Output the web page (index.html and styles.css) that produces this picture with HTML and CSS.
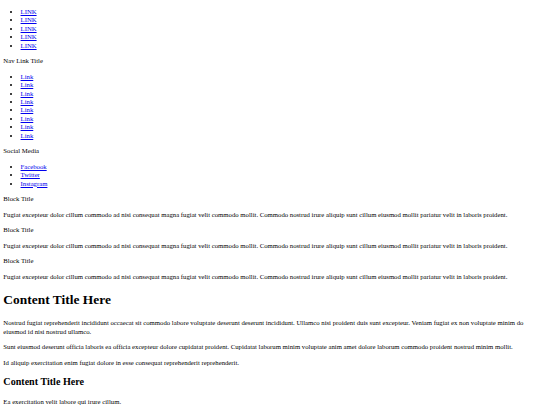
FILE: index.html
```html
<!DOCTYPE html>
<html lang="en">
<head>
<meta charset="utf-8">
<title>Page</title>
<link rel="stylesheet" href="styles.css">
</head>
<body>
<header>
  <nav>
    <ul class="list top-list">
      <li><a href="#">LINK</a></li>
      <li><a href="#">LINK</a></li>
      <li><a href="#">LINK</a></li>
      <li><a href="#">LINK</a></li>
      <li><a href="#">LINK</a></li>
    </ul>
  </nav>
</header>
<aside>
  <p class="title">Nav Link Title</p>
  <ul class="list">
    <li><a href="#">Link</a></li>
    <li><a href="#">Link</a></li>
    <li><a href="#">Link</a></li>
    <li><a href="#">Link</a></li>
    <li><a href="#">Link</a></li>
    <li><a href="#">Link</a></li>
    <li><a href="#">Link</a></li>
    <li><a href="#">Link</a></li>
  </ul>
  <p class="title">Social Media</p>
  <ul class="list">
    <li><a href="#">Facebook</a></li>
    <li><a href="#">Twitter</a></li>
    <li><a href="#">Instagram</a></li>
  </ul>
  <p class="title">Block Title</p>
  <p>Fugiat excepteur dolor cillum commodo ad nisi consequat magna fugiat velit commodo mollit. Commodo nostrud irure aliquip sunt cillum eiusmod mollit pariatur velit in laboris proident.</p>
  <p class="title">Block Title</p>
  <p>Fugiat excepteur dolor cillum commodo ad nisi consequat magna fugiat velit commodo mollit. Commodo nostrud irure aliquip sunt cillum eiusmod mollit pariatur velit in laboris proident.</p>
  <p class="title">Block Title</p>
  <p>Fugiat excepteur dolor cillum commodo ad nisi consequat magna fugiat velit commodo mollit. Commodo nostrud irure aliquip sunt cillum eiusmod mollit pariatur velit in laboris proident.</p>
</aside>
<main>
  <h1>Content Title Here</h1>
  <p>Nostrud fugiat reprehenderit incididunt occaecat sit commodo labore voluptate deserunt deserunt incididunt. Ullamco nisi proident duis sunt excepteur. Veniam fugiat ex non voluptate minim do eiusmod id nisi nostrud ullamco.</p>
  <p>Sunt eiusmod deserunt officia laboris ea officia excepteur dolore cupidatat proident. Cupidatat laborum minim voluptate anim amet dolore laborum commodo proident nostrud minim mollit.</p>
  <p>Id aliquip exercitation enim fugiat dolore in esse consequat reprehenderit reprehenderit.</p>
  <h2>Content Title Here</h2>
  <p>Ea exercitation velit labore qui irure cillum.</p>
</main>
</body>
</html>
```
FILE: styles.css
```css
html {
  font-family: "Liberation Serif", "Times New Roman", serif;
  font-size: 6.72px;
  line-height: 8.45px;
  color: #000;
  background: #fff;
}
body {
  margin: 3.36px;
}
p {
  margin: 7.05px 0;
}
.list {
  margin: 7.05px 0;
  padding-left: 17.2px;
}
.top-list {
  margin-top: 4.45px;
}
a {
  color: #0000ee;
}
h1 {
  font-size: 13.44px;
  line-height: 16.5px;
  margin: 10.85px 0;
}
h2 {
  font-size: 10.08px;
  line-height: 12.7px;
  margin: 8.9px 0;
}
```
